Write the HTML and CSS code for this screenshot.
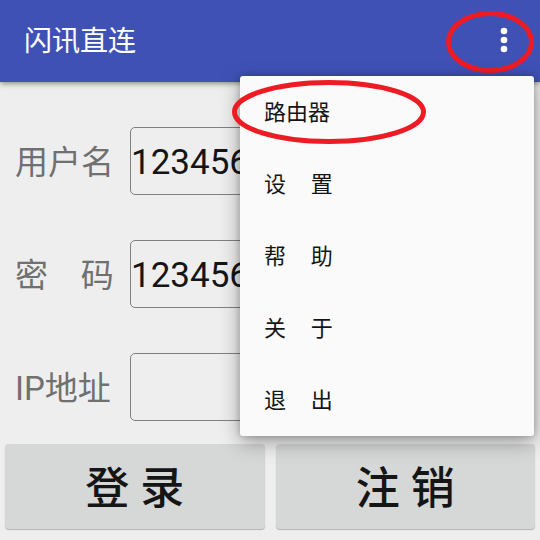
FILE: index.html
```html
<!DOCTYPE html>
<html lang="zh-CN">
<head>
<meta charset="utf-8">
<meta name="viewport" content="width=device-width, initial-scale=1">
<title>闪讯直连</title>
<link rel="stylesheet" href="styles.css">
</head>
<body>
<header class="app-bar">
  <h1 class="title">闪讯直连</h1>
  <button class="overflow" type="button" aria-label="更多选项">
    <svg width="8" height="26" viewBox="0 0 8 26" fill="#fff"><circle cx="4" cy="4" r="3.3"/><circle cx="4" cy="13" r="3.3"/><circle cx="4" cy="22" r="3.3"/></svg>
  </button>
  <svg class="ring ring-overflow" width="88" height="62" viewBox="0 0 88 62"><ellipse cx="44" cy="31" rx="41.5" ry="28.5"/></svg>
</header>

<main>
  <form class="login">
    <div class="field">
      <label for="user">用户名</label>
      <input id="user" type="text" value="12345678901">
    </div>
    <div class="field">
      <label for="password">密    码</label>
      <input id="password" type="text" value="123456">
    </div>
    <div class="field">
      <label for="ip">IP地址</label>
      <input id="ip" type="text">
    </div>
    <div class="actions">
      <button type="button">登 录</button>
      <button type="button">注 销</button>
    </div>
  </form>
</main>

<nav class="menu">
  <button type="button">路由器</button>
  <button type="button">设     置</button>
  <button type="button">帮     助</button>
  <button type="button">关     于</button>
  <button type="button">退     出</button>
  <svg class="ring ring-router" width="194" height="64" viewBox="0 0 194 64"><ellipse cx="97" cy="32" rx="94.5" ry="29.5"/></svg>
</nav>
</body>
</html>
```
FILE: styles.css
```css
* {
  box-sizing: border-box;
}

body {
  margin: 0;
  position: relative;
  background: #eee;
  color: #151515;
  font-family: Roboto, "Noto Sans CJK SC", sans-serif;
}

button,
input {
  font: inherit;
  color: inherit;
}

.app-bar {
  position: relative;
  display: flex;
  align-items: center;
  justify-content: space-between;
  padding: 0 24px 2px;
  height: 82px;
  background: #3f51b5;
  box-shadow: 0 1px 6px rgba(0, 0, 0, 0.5);
}

.title {
  margin: 0;
  padding-top: 4px;
  color: #fff;
  font-size: 28px;
  line-height: 40px;
  font-weight: 400;
}

.overflow {
  display: flex;
  justify-content: center;
  width: 24px;
  padding: 0;
  border: 0;
  background: none;
}

.ring {
  position: absolute;
  fill: none;
  stroke: #ed1c24;
  stroke-width: 5px;
  pointer-events: none;
}

.ring-overflow {
  top: 11px;
  right: 6px;
}

.login {
  display: grid;
  gap: 45px;
  padding: 45px 5px 11px;
}

.field {
  display: grid;
  grid-template-columns: 115px 1fr;
  align-items: center;
  padding: 0 10px;
}

.field label {
  padding-top: 4px;
  color: #707070;
  font-size: 33px;
  line-height: 48px;
  white-space: pre;
}

.field input {
  width: 100%;
  height: 68px;
  padding: 2px 0 0;
  border: 1px solid #808080;
  border-radius: 5px;
  background: transparent;
  font-size: 35px;
}

.actions {
  display: grid;
  grid-template-columns: 1fr 1fr;
  gap: 11px;
  margin-top: -22px;
}

.actions button {
  height: 85px;
  padding: 0 0 4px;
  border: 0;
  border-radius: 4px;
  background: #d6d7d7;
  box-shadow: 0 1px 1px rgba(0, 0, 0, 0.25);
  font-size: 44px;
  font-weight: 500;
}

.menu {
  position: absolute;
  top: 76px;
  right: 6px;
  display: flex;
  flex-direction: column;
  width: 294px;
  border-radius: 3px;
  background: #fafafa;
  box-shadow: 0 6px 20px rgba(0, 0, 0, 0.35), 0 0 6px rgba(0, 0, 0, 0.2);
}

.menu button {
  height: 72px;
  padding: 0 24px 4px;
  border: 0;
  background: none;
  font-family: "Noto Sans CJK SC", sans-serif;
  font-size: 22px;
  text-align: left;
  white-space: pre;
}

.ring-router {
  top: 4px;
  left: -8px;
}
```
